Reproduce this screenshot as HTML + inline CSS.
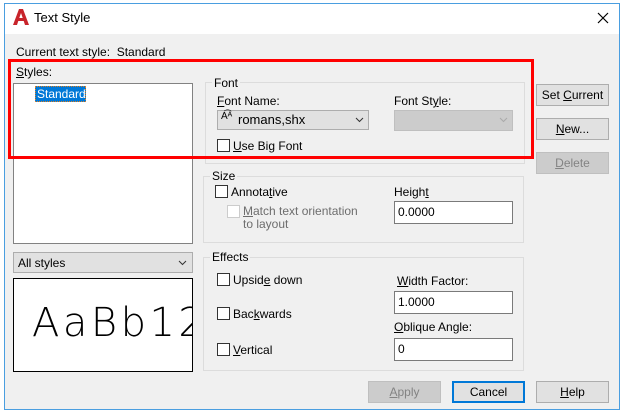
<!DOCTYPE html>
<html><head><style>
*{box-sizing:border-box;margin:0;padding:0}
body{width:624px;height:414px;background:#fff;font-family:"Liberation Sans",sans-serif;font-size:12px;color:#000;position:relative;overflow:hidden}
.a{position:absolute}
.win{left:4px;top:3px;width:616px;height:407px;border:1px solid #4a9ee0;background:#f0f0f0}
.tb{left:5px;top:4px;width:614px;height:30px;background:#fff}
.grp{border:1px solid #dcdcdc}
.gl{background:#f0f0f0;padding:0 2px}
.box{background:#fff;border:1px solid #7a7a7a}
.btn{background:#e1e1e1;border:1px solid #adadad;text-align:center;line-height:20px}
.dis{background:#ccc;border:1px solid #bfbfbf;color:#838383}
.cb{width:13px;height:13px;border:1px solid #333;background:#fff}
u{text-decoration:underline}
</style></head><body>
<div class="a win"></div>
<div class="a tb"></div>
<svg class="a" style="left:12px;top:8px" width="18" height="18" viewBox="0 0 18 18"><path d="M1 17L7 1h4l6 16h-4l-1.3-4H6.3L5 17zM7.3 10h3.4L9 5z" fill="#c8242b"/></svg>
<div class="a" style="left:34px;top:10px;font-size:13px">Text Style</div>
<svg class="a" style="left:597px;top:12px" width="12" height="12"><path d="M1 1L11 11M11 1L1 11" stroke="#000" stroke-width="1.2"/></svg>
<div class="a" style="left:16px;top:45px">Current text style:&nbsp; Standard</div>
<div class="a" style="left:16px;top:65px"><u>S</u>tyles:</div>
<div class="a box" style="left:13px;top:83px;width:180px;height:161px;border-color:#828282"></div>
<div class="a" style="left:35px;top:86px;width:51px;height:16px;background:#0078d7;color:#fff;border:1px dotted #e08020;line-height:14px;padding-left:1px">Standard</div>
<div class="a grp" style="left:205px;top:82px;width:320px;height:82px"></div>
<div class="a gl" style="left:212px;top:76px">Font</div>
<div class="a" style="left:217px;top:94px"><u>F</u>ont Name:</div>
<div class="a" style="left:217px;top:110px;width:152px;height:20px;background:#e1e1e1;border:1px solid #adadad"></div>
<div class="a" style="left:221px;top:111px;font-size:10px">A͡ᴬ</div>
<div class="a" style="left:238px;top:112px;font-size:13px">romans,shx</div>
<svg class="a" style="left:355px;top:117px" width="9" height="6"><path d="M1 1l3.5 3.5L8 1" stroke="#333" fill="none"/></svg>
<div class="a" style="left:394px;top:94px">Font St<u>y</u>le:</div>
<div class="a dis" style="left:394px;top:110px;width:119px;height:21px"></div>
<svg class="a" style="left:499px;top:117px" width="9" height="6"><path d="M1 1l3.5 3.5L8 1" stroke="#aaa" fill="none"/></svg>
<div class="a cb" style="left:217px;top:139px"></div>
<div class="a" style="left:233px;top:139px"><u>U</u>se Big Font</div>
<div class="a btn" style="left:536px;top:84px;width:73px;height:22px">Set <u>C</u>urrent</div>
<div class="a btn" style="left:536px;top:118px;width:73px;height:22px"><u>N</u>ew...</div>
<div class="a btn dis" style="left:536px;top:152px;width:73px;height:22px"><u>D</u>elete</div>
<div class="a" style="left:8px;top:59px;width:526px;height:100px;border:3px solid #f00"></div>
<div class="a grp" style="left:203px;top:176px;width:321px;height:67px"></div>
<div class="a gl" style="left:210px;top:169px">Size</div>
<div class="a cb" style="left:215px;top:185px"></div>
<div class="a" style="left:231px;top:185px">Annota<u>t</u>ive</div>
<div class="a cb" style="left:227px;top:205px;border-color:#ccc"></div>
<div class="a" style="left:243px;top:205px;color:#6d6d6d;line-height:13px"><u>M</u>atch text orientation<br>to layout</div>
<div class="a" style="left:394px;top:185px">Heigh<u>t</u></div>
<div class="a box" style="left:394px;top:201px;width:119px;height:23px;padding:3px 3px">0.0000</div>
<div class="a" style="left:13px;top:252px;width:180px;height:21px;background:#e1e1e1;border:1px solid #adadad;padding:3px 4px">All styles</div>
<svg class="a" style="left:178px;top:260px" width="9" height="6"><path d="M1 1l3.5 3.5L8 1" stroke="#333" fill="none"/></svg>
<div class="a" style="left:13px;top:278px;width:180px;height:94px;background:#fff;border:1px solid #000;overflow:hidden"><div style="position:absolute;left:18px;top:24px;font-size:40px;line-height:1;letter-spacing:3.5px;white-space:nowrap;color:#000;font-family:'DejaVu Sans',sans-serif;font-weight:200">AaBb12</div></div>
<div class="a grp" style="left:203px;top:257px;width:321px;height:114px"></div>
<div class="a gl" style="left:210px;top:250px">Effects</div>
<div class="a cb" style="left:217px;top:273px"></div>
<div class="a" style="left:233px;top:273px">Upsid<u>e</u> down</div>
<div class="a cb" style="left:217px;top:307px"></div>
<div class="a" style="left:233px;top:307px">Bac<u>k</u>wards</div>
<div class="a cb" style="left:217px;top:343px"></div>
<div class="a" style="left:233px;top:343px"><u>V</u>ertical</div>
<div class="a" style="left:397px;top:274px"><u>W</u>idth Factor:</div>
<div class="a box" style="left:394px;top:291px;width:119px;height:23px;padding:3px 3px">1.0000</div>
<div class="a" style="left:394px;top:320px"><u>O</u>blique Angle:</div>
<div class="a box" style="left:394px;top:338px;width:119px;height:23px;padding:3px 3px">0</div>
<div class="a btn dis" style="left:368px;top:381px;width:73px;height:22px"><u>A</u>pply</div>
<div class="a btn" style="left:452px;top:381px;width:73px;height:22px;border:2px solid #0078d7;line-height:18px">Cancel</div>
<div class="a btn" style="left:536px;top:381px;width:73px;height:22px"><u>H</u>elp</div>
</body></html>
